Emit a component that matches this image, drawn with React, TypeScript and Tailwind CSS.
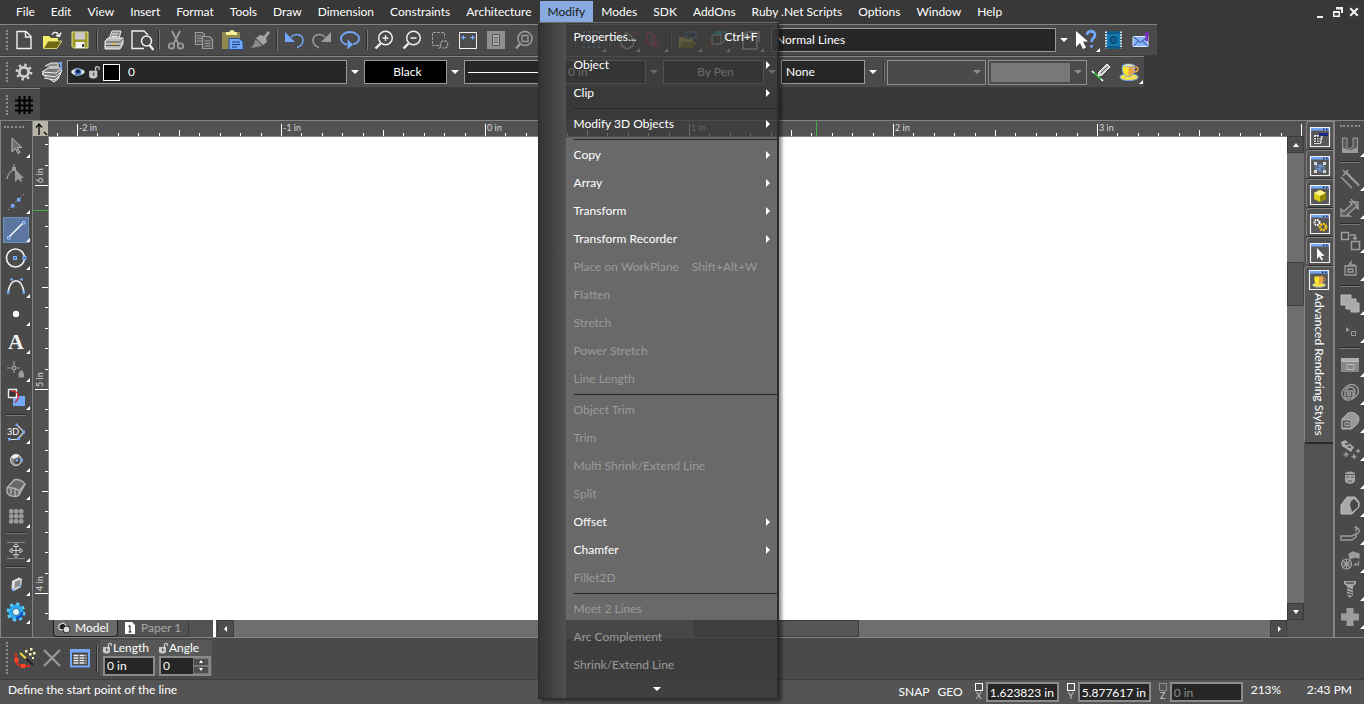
import React from 'react';

const W = '#f0f0f0';
const G = '#9c9c9c';
const B = '#73a7f7';

const icons: Record<string, React.ReactNode> = {
  newFile: <path d="M5 3.5h9l5 5v12H5z M13.5 3.5v5.5H19" fill="none" stroke={W} strokeWidth="1.4" />,
  open: (
    <>
      <path d="M3 8h6l2 2h7v3H9l-5 7H3z" fill="#f5ee6a" />
      <path d="M8 13h14l-5 7.500H3.500z" fill="#6f6b10" stroke="#eee884" strokeWidth=".8" />
      <path d="M12 6.500c2-3 6-3 7 1.500M16 7.500l3.500 1 1.500-4" fill="none" stroke={W} strokeWidth="1.400" />
    </>
  ),
  save: (
    <>
      <path d="M4 4h16v16H5.500L4 18.500z" fill="#9c9a2a" stroke="#e8e69a" />
      <path d="M7 4.500h10v7H7z" fill="#c9c9c9" />
      <path d="M7.500 14h9v6h-9z" fill="#f4f4f4" />
      <path d="M14 16h2v3h-2z" fill="#444" />
    </>
  ),
  print: (
    <>
      <path d="M7 11l3-8h9l-2 8z" fill="#8b8b8b" stroke={W} />
      <path d="M10 6h6M9.500 8.500h6" stroke={W} />
      <path d="M3 13l3-3h15v6l-3 5H3z" fill="#b9b9b9" stroke={W} />
      <path d="M4 14h14l3-3M4 17.500h14" stroke="#555" fill="none" />
      <path d="M10 15h4v1.500h-4z" fill="#d9c93a" />
    </>
  ),
  preview: (
    <>
      <path d="M18 7L14 3H2v17.500h12" fill="none" stroke={W} strokeWidth="1.400" />
      <circle cx="16.500" cy="13" r="5" fill="none" stroke={W} strokeWidth="1.500" />
      <path d="M19.500 17l4 5" stroke={W} strokeWidth="2.200" />
    </>
  ),
  cut: (
    <g fill="none" stroke={G} strokeWidth="1.800">
      <path d="M8 3l6.500 13M16 3L9.500 16" />
      <circle cx="7.500" cy="18" r="2.700" />
      <circle cx="16.500" cy="18" r="2.700" />
    </g>
  ),
  copy: (
    <g fill="#555" stroke={G} strokeWidth="1.200">
      <path d="M3.500 4.500h7l2 2v10h-9z M5 8h5M5 10.500h5M5 13h5" />
      <path d="M10.500 8.500h7l3 3v9h-10z M12.500 13h6M12.500 15.500h6M12.500 18h6" />
    </g>
  ),
  paste: (
    <>
      <path d="M2 4h18v17H2z" fill="#8f8b50" />
      <path d="M6 4h3l2-2h2l2 2h2v3H6z" fill="#f5ee9a" />
      <path d="M9 10.500h10l4 3v8H9z" fill="#73a7f7" stroke="#2c4a8c" />
      <path d="M12 14h8M12 16.500h8M12 19h5" stroke="#1f3a78" />
    </>
  ),
  brush: (
    <>
      <path d="M20 3l2 2-4 5 1 4-4 3-7-7 4-3 4 1z" fill="#a5a5a5" />
      <path d="M7.500 11l6.500 6.500-4 1.500-7 1 3-4z" fill="#8b8b8b" />
    </>
  ),
  undo: (
    <>
      <path d="M3 4v10h10z" fill={B} />
      <path d="M9 9c5-5 12-2 12 3.500 0 3-2 5.500-6 7" fill="none" stroke={B} strokeWidth="1.500" />
    </>
  ),
  redo: (
    <>
      <path d="M21 4v10H11z" fill={G} />
      <path d="M15 9C10 4 3 7 3 12.500c0 3 2 5.500 6 7" fill="none" stroke={G} strokeWidth="1.500" />
    </>
  ),
  loop: (
    <>
      <path d="M9 16.500C5 16 3 13 3 10.500 3 7 7 4 12 4s9 3 9 6.500c0 2.500-2 5.500-6 5.500" fill="none" stroke={B} strokeWidth="1.800" />
      <path d="M9.500 11.500l5.500 5-5.500 5z" fill={B} />
    </>
  ),
  zoomIn: (
    <g fill="none" stroke={W}>
      <circle cx="13.500" cy="10" r="6.800" strokeWidth="1.500" />
      <path d="M8.500 15.500L3.500 20.500" strokeWidth="2.400" />
      <path d="M10.500 10h6M13.500 7v6" strokeWidth="1.300" />
    </g>
  ),
  zoomOut: (
    <g fill="none" stroke={W}>
      <circle cx="13.500" cy="10" r="6.800" strokeWidth="1.500" />
      <path d="M8.500 15.500L3.500 20.500" strokeWidth="2.400" />
      <path d="M10.500 10h6" strokeWidth="1.500" />
    </g>
  ),
  zoomWindow: (
    <g fill="none" stroke={G}>
      <path d="M11 17.500H4.500v-13h12V10" strokeDasharray="3 1" />
      <path d="M12.500 18.500v-3.500l2-2h3.500l1.500 2v3.500l-2 1.500h-3M13 18.500l-2.500 2.500" strokeWidth="1.400" strokeDasharray="3 1" />
    </g>
  ),
  extents: (
    <>
      <path d="M3.500 4.500h17v16h-17z" fill="#4d4d4d" stroke={W} />
      <path d="M5 9.500l3-2.500v5zM19 9.500l-3-2.500v5z" fill={B} />
      <path d="M8 9.500h2M14 9.500h2" stroke={B} />
    </>
  ),
  fullPage: (
    <>
      <path d="M3 3h18v18H3z" fill="#8f8f8f" />
      <path d="M8.500 6.500h7v11h-7z M10 9.500h4M10 12h4M10 14.500h4" fill="#ababab" stroke="#555" />
    </>
  ),
  zoomSel: (
    <g fill="none" stroke={G}>
      <circle cx="13" cy="10.500" r="7" strokeWidth="1.500" />
      <path d="M10 7.500h6v6h-6z" strokeWidth="1.300" />
      <path d="M8 16l-4 4.500" strokeWidth="2.300" />
    </g>
  ),
  dotGrid: (
    <g fill={B}>
      {[5, 10, 15, 20].map((x) => [5, 10, 15, 20].map((y) => <circle key={`${x}-${y}`} cx={x - 1} cy={y - 1} r="1.300" />))}
    </g>
  ),
  hand: (
    <>
      <path d="M5 9l4 3 3-7 4 2 4 5-1 6-6 3-5-3z" fill="none" stroke={W} strokeWidth="1.300" />
      <path d="M18 4h4v4M3 5h4M4 18h3" stroke="#e33" fill="none" />
    </>
  ),
  plane: (
    <>
      <path d="M5 4l8 4v11l-8-5z" fill="none" stroke="#d34" strokeWidth="1.500" />
      <path d="M10 9l6 3v5l-6-3z" fill="none" stroke="#d34" />
      <path d="M10 9v8" stroke={B} />
    </>
  ),
  folder: (
    <>
      <path d="M3 9h5l2 2h7v9H3z" fill="#d6cb3f" />
      <path d="M10 4h10v6H10z" fill="#3b3b3b" stroke={B} />
      <path d="M6 14h15l-4 6H3z" fill="#8f8720" />
    </>
  ),
  cube: (
    <>
      <path d="M8 7l4-4h9l-4 4z" fill="#2fb0b0" />
      <path d="M8 7h9v9H8zM17 16l4-4V3" fill="none" stroke={W} />
      <path d="M2 18l6-3v6M8 16l-4-6" stroke="#e33" fill="none" />
    </>
  ),
  sheet: <path d="M5 8h14v13H5zM5 8l4-4h12v10M14 4v4" fill="none" stroke={W} strokeWidth="1.400" />,
  help: (
    <>
      <path d="M2 3v16l4-4 3 6 3-1.500-3-6h5z" fill="#fff" />
      <path d="M13 7c0-5 8-5 8 0 0 3-3.500 3-3.500 7M17.500 17v2.500" fill="none" stroke={B} strokeWidth="2.800" />
    </>
  ),
  book: (
    <>
      <path d="M4 3.500h15v17H4z" fill="#1478ae" />
      <path d="M4.500 3.500h14v2.500h-14zM4.500 18h14v2.500h-14z" fill="#0a5a8a" />
      <path d="M4 3.500v17M19 3.500v17" stroke="#eee" strokeWidth="1.800" strokeDasharray="1.600 1.200" />
      <circle cx="11.500" cy="12" r="3" fill="none" stroke="#0b3f66" strokeWidth="1.300" />
      <circle cx="11.500" cy="12" r="1" fill="#0b3f66" />
    </>
  ),
  mail: (
    <>
      <path d="M3 8.500h15v10H3z" fill="#86b2f8" stroke="#dce8ff" />
      <path d="M3 8.500l7.500 6 7.500-6M3 18.500l5.500-5.500M18 18.500l-5.500-5.500" fill="none" stroke="#2e4f93" />
      <path d="M15.500 13V7h-2L17 3l3 4h-2v6z" fill="#7a2fc0" />
    </>
  ),
  gear: (
    <>
      <circle cx="12" cy="12" r="4.600" fill="none" stroke="#cfcfcf" strokeWidth="2.800" />
      <circle cx="12" cy="12" r="7" fill="none" stroke="#cfcfcf" strokeWidth="2.800" strokeDasharray="2.400 3.100" />
    </>
  ),
  layers: (
    <>
      <path d="M2 14l6-4h14l-4 9-4 3z" fill="#777" stroke={W} />
      <path d="M2 12l6-4h14l-6 5zM3 15l12 2 6-5M4 18l11 2 6-6" fill="#777" stroke={W} />
      <path d="M5 6l6-3h7v4H9" fill="#8a8a8a" stroke={W} />
      <path d="M19 3h2v7" fill="none" stroke={B} strokeWidth="1.800" />
    </>
  ),
  pencil: (
    <>
      <path d="M3 11l11 10" stroke="#2fd02f" strokeWidth="1.500" />
      <path d="M3 11l2 2M12 19l2 2" stroke="#fff" strokeWidth="1.500" />
      <path d="M9 16l1-4 8-8 3 3-8 8z" fill="#c8c8c8" stroke="#fff" />
      <path d="M12 13l7-7" stroke="#555" />
    </>
  ),
  cup: (
    <>
      <path d="M3 17c0-2 3-3 9-3s9 1 9 3-3 3.500-9 3.500S3 19 3 17z" fill="#f7e04b" stroke={B} />
      <path d="M5.500 5.500h12c1 6-1 11-6 11s-7-5-6-11z" fill="#fbe62a" stroke={B} />
      <path d="M11.500 6h5.500c.8 5-1 10-5.500 10z" fill="#e9a14a" />
      <path d="M6 5.500c2-2 9-2 11.500 0-2 1.500-9 1.500-11.500 0z" fill="#fff3a0" stroke={B} strokeWidth=".8" />
      <path d="M18 7c4-1 4 5-.5 5" fill="none" stroke="#e9a14a" strokeWidth="1.500" />
    </>
  ),
  grid: <path d="M7.500 3v18M12.500 3v18M17.500 3v18M3 7.500h18M3 12.500h18M3 17.500h18" stroke="#000" strokeWidth="2" fill="none" />,
  select: <path d="M8 4v14l3.500-3.500 2.500 5 2-1-2.500-5h4.500z" fill="#707070" stroke="#b5b5b5" />,
  editNode: (
    <>
      <path d="M3 17c1-6 4-8 7-10M10 7V2" fill="none" stroke={G} strokeWidth="1.300" />
      <path d="M8 5h4v4H8z" fill={G} />
      <path d="M11 7v13l3-3 4 4-1-5h3z" fill="#999" />
    </>
  ),
  pointLine: (
    <>
      <path d="M4 20L20 4" stroke="#aaa" strokeDasharray="1.500 2" />
      <path d="M7 14h3.500v3.500H7zM13 8h3.500v3.500H13z" fill={B} />
    </>
  ),
  line: (
    <>
      <path d="M4.500 19.500L19.500 4.500" stroke="#fff" strokeWidth="1.500" />
      <path d="M3.500 18.500h2.500v2.500H3.500zM18.500 3.500H21V6h-2.500z" fill="#4a78c8" stroke="#a8ccff" />
    </>
  ),
  circle: (
    <>
      <circle cx="11.500" cy="12" r="9" fill="none" stroke={W} strokeWidth="1.600" />
      <path d="M9.500 10.500h3v3h-3zM19 10.500h3v3h-3z" fill="#3d6fc4" stroke="#8cbaff" />
    </>
  ),
  curve: (
    <>
      <path d="M4 18C7 3 17 3 20 18" fill="none" stroke={W} strokeWidth="1.500" />
      <path d="M6 4.500h3v2H6zM16 4.500h3v2h-3zM3 17h2.500v3H3zM18.500 17H21v3h-2.500z" fill={B} />
    </>
  ),
  dot: <circle cx="12" cy="12" r="3.200" fill="#fff" />,
  snapLock: (
    <>
      <path d="M3 10h5M12 10h4M10 3v5M10 12v3M8.500 8.500h3v3h-3z" fill="none" stroke={G} strokeWidth="1.200" />
      <path d="M15 15h4.500v4H15zM16 15v-2h2.500v2" fill={G} stroke={G} />
    </>
  ),
  squares: (
    <>
      <path d="M9 10h12v10H9z" fill={B} />
      <path d="M4.500 3.500h8v8h-8z" fill="#333" stroke={W} strokeWidth="1.400" />
      <path d="M7 5.500c9-1 9 6 4 11" fill="none" stroke="#d22" strokeWidth="1.300" />
    </>
  ),
  threeD: (
    <>
      <text x="3" y="15" fontSize="9" fill="#fff">3D</text>
      <path d="M13 5l7 7-6 7M5 19.500h10" fill="none" stroke="#ddd" strokeWidth="1.200" />
      <path d="M11.500 3.500h2.500V6h-2.500zM18.500 10.500h2.500v3h-2.500zM13 17.500h3v2.500h-3zM4 18h3v2.500H4z" fill={B} />
    </>
  ),
  sphere: (
    <>
      <circle cx="12" cy="12" r="5.500" fill="#8b8b8b" stroke="#ddd" />
      <path d="M7 9a6 6 0 0 1 8-2l-3 5z" fill="#eee" />
      <circle cx="13" cy="13" r="3" fill="#444" />
      <path d="M11.500 11h2.500v2.500h-2.500zM16.500 11H19v2.500h-2.500z" fill={B} />
    </>
  ),
  can: (
    <>
      <path d="M3 12l7-8c3-1.500 9 .5 11 4l-6 11c-3 3-11 1-12-3z" fill="#686868" stroke="#b5b5b5" strokeWidth="1.400" />
      <path d="M3 12c3-1 9 0 12 3l6-7M15 15v4M7 12v6M11 13v7" fill="none" stroke="#b5b5b5" strokeWidth="1.300" />
    </>
  ),
  blocks: (
    <g fill={G}>
      {[5, 10, 15].map((x) => [5, 10, 15].map((y) => <rect key={`${x}-${y}`} x={x} y={y} width="4.500" height="4.500" rx="1.500" />))}
    </g>
  ),
  move: (
    <>
      <path d="M3 4.500h18M3 20.500h18" stroke="#888" />
      <path d="M12 6v13M5 12.500h14" stroke="#ccc" />
      <path d="M12 5.500l2.500 3h-5zM12 19.500l2.500-3h-5zM5 12.500l3-2.500v5zM19 12.500l-3-2.500v5z" fill="#4b4b4b" stroke="#ccc" />
    </>
  ),
  slab: (
    <>
      <path d="M8 9l7-3.500 3 1.500-1 8-7 4-2.500-2z" fill="#ddd" />
      <path d="M11 10l5.500-2.500-.5 6-5.500 3z" fill="#8a8a8a" />
      <path d="M8 16.500h2.500v2.500H8zM15 13h2v2.500h-2z" fill={B} />
    </>
  ),
  blueGear: (
    <>
      <circle cx="12" cy="12" r="5.500" fill="none" stroke="#2ba8f2" strokeWidth="4" />
      <circle cx="12" cy="12" r="8.200" fill="none" stroke="#57d1fb" strokeWidth="2.600" strokeDasharray="3.200 3.240" />
      <circle cx="12" cy="12" r="3" fill="#d9f6ff" />
      <path d="M12 18a6 6 0 0 0 6-6" fill="none" stroke="#1450c8" strokeWidth="2.500" />
    </>
  ),
  magnet: (
    <>
      <path d="M4.500 5v14.500H19.500V5H15v9l-4 2-2-2V5z" fill="#5c5c5c" stroke={G} />
      <path d="M4 14v6h16v-6l-7 3h-2z" fill={G} />
    </>
  ),
  parallel: <path d="M3 10l11 11M8 5l13 13M10 3l-5 6M5 3l16 16" stroke={G} strokeWidth="1.600" />,
  offset: (
    <g fill="none" stroke={G} strokeWidth="1.300">
      <path d="M3 21v-7l2.500 2.500L14 9l-2-2h8v7l-2-2-8.500 7.500L12 21z" fill="#5a5a5a" />
      <path d="M13 4l7 8" />
    </g>
  ),
  copyTo: (
    <g fill="none" stroke={G} strokeWidth="1.500">
      <path d="M3.500 3.500h7v7h-7zM13.500 12.500h8v8h-8z" />
      <path d="M12 6h5v4M15 8.500l2 2 2-2" />
    </g>
  ),
  rotateBox: (
    <g fill="none" stroke={G} strokeWidth="1.300">
      <path d="M7 9h11v9H7zM10 12h5v3h-5z" />
      <path d="M10 9l3-4v3h4" />
    </g>
  ),
  union: <path d="M3 4h10v4h5v4h3v9h-8v-3H8v-4H3z" fill="#aaa" stroke="#bbb" />,
  tiny: (
    <>
      <path d="M8 8l4 3-4 2z" fill={G} />
      <path d="M13.500 12.500h4v4h-4z" fill="none" stroke={G} />
    </>
  ),
  panel: (
    <>
      <path d="M3 5h18v14H3z" fill="#888" />
      <path d="M3 5h18v3H3z" fill="#b0b0b0" />
      <path d="M9 11.500h7v5H9zM3 8.500h18" fill="none" stroke="#bbb" />
    </>
  ),
  ring: (
    <g fill="none" stroke={G} strokeWidth="1.400">
      <path d="M5 9l4-4c6-4 13 1 11 7-1 3-4 5-7 7M5 9c-3 5 1 11 7 10" />
      <path d="M7 10h8v7H7zM9.500 12h3v2.500h-3zM8 9c3-5 9-3 9 2 0 3-1 4-3 6" />
    </g>
  ),
  tube: (
    <>
      <path d="M4 10l6-6c4-2 11 1 11 6 0 4-5 9-8 10H4z" fill="#999" stroke="#b5b5b5" />
      <path d="M4 11h9v8H4zM7 13.500h4v3H7z" fill="#555" stroke="#b5b5b5" />
    </>
  ),
  spray: (
    <>
      <path d="M3 5l4-2 9 7-3 5-9-6z" fill="#aaa" />
      <path d="M7 7h4M10 10h3" stroke="#444" strokeWidth="1.500" />
      <path d="M8 15v5M5.500 17.500h5M20 12v4M18 14h4M16 17v5M13.500 19.500h5" stroke={G} strokeWidth="1.500" />
    </>
  ),
  head: (
    <>
      <path d="M7 9c0-3.500 10-3.500 10 0v6c0 5-10 5-10 0z" fill="#a5a5a5" />
      <path d="M7 9.500h10M8.500 12h2.500M13 12h2.500M10 16h4" stroke="#555" strokeWidth="1.200" />
    </>
  ),
  wedge: (
    <>
      <path d="M3 12l6-8h8l4 5v5l-7 7H3z" fill="#aaa" stroke="#bbb" />
      <path d="M12 12c0-3 2-5 4-6l4 4v4l-6 5z" fill="#484848" />
    </>
  ),
  bend: (
    <g fill="none" stroke={G} strokeWidth="1.400">
      <path d="M3 15h11l4-2v3l-4 3H3z" />
      <path d="M18 13c4-1 4-5 1-6l-2-1M17 10c2-1 2-3 0-5" />
    </g>
  ),
  globe: (
    <g fill="none" stroke={G} strokeWidth="1.200">
      <path d="M11 5l4-2 6 2v4l-4-1-5 2z" fill={G} />
      <circle cx="8.500" cy="15" r="5" />
      <path d="M3.500 15h10M8.500 10v10M5 11.500l7 7M12 11.500l-7 7M20.500 12v4h-4l2-2" />
    </g>
  ),
  screw: (
    <>
      <path d="M6 4h12v3l-3 2v9l-3 3-3-3V9L6 7z" fill="#a5a5a5" />
      <path d="M8 6h8M9 11l6 2M9 14l6 2M9 17l5 1" stroke="#505050" strokeWidth="1.300" />
    </>
  ),
  plus: <path d="M8.500 3h7v5.500H21v7h-5.500V21h-7v-5.500H3v-7h5.500z" fill="#9d9d9d" />,
  wand: (
    <>
      <path d="M4 7v7c0 4 3 6 8 6h6" fill="none" stroke="#e32a1a" strokeWidth="1.800" />
      <path d="M2.500 12h4v4h-4zM9 18h4v4H9z" fill="#ff4a2a" />
      <path d="M9 8l12 11" stroke="#222" strokeWidth="2" />
      <path d="M8 7l6 5.500" stroke="#e9df4a" strokeWidth="2" />
      <path d="M13 4h2.500v2.500H13zM18 2h2.500v2.500H18zM17 7h2.500v2.500H17zM21 6h2.500v2.500H21zM20 11h2v2h-2z" fill="#f8f3a8" />
    </>
  ),
  cancel: <path d="M4 4l16 16M20 4L4 20" stroke="#9a9a9a" strokeWidth="2.200" />,
  table: (
    <>
      <path d="M3 4h18v16.500H3z" fill="#4a4a4a" stroke={B} strokeWidth="2" />
      <path d="M3 3.500h18v3H3z" fill={B} />
      <path d="M5.500 9.500h13M5.500 12h13M5.500 14.500h13M5.500 17h13" stroke="#eee" strokeWidth="1.400" strokeDasharray="5 1" />
    </>
  ),
};

function Icon({ name }: { name: string }) {
  return (
    <svg viewBox="0 0 24 24" className="w-6 h-6 shrink-0" fill="none" aria-hidden="true">
      {icons[name]}
    </svg>
  );
}

function Slot({ name, fly = false, active = false }: { name: string; fly?: boolean; active?: boolean }) {
  return (
    <button type="button" aria-label={name} className="relative w-7 h-7 shrink-0 flex items-center justify-center">
      {active && <span className="absolute inset-px bg-[#5b779f] border border-[#6d8dbb]" />}
      <span className="relative">
        {name === 'letter' ? (
          <span className="block font-['Liberation_Serif',serif] font-bold text-[22px] leading-6 text-[#f0f0f0]">A</span>
        ) : (
          <Icon name={name} />
        )}
      </span>
      {fly && (
        <svg viewBox="0 0 4 4" className="absolute right-0 bottom-0.5 w-1 h-1">
          <path d="M4 0v4H0z" fill="#fff" />
        </svg>
      )}
    </button>
  );
}

const VSep = () => (
  <div className="w-1.5 shrink-0 flex justify-center">
    <div className="w-0.5 h-5 bg-[#2c2c2c] border-r border-[#7a7a7a]" />
  </div>
);
const HSep = () => (
  <div className="h-1.5 w-7 shrink-0 flex flex-col justify-center items-center">
    <div className="h-0.5 w-5 bg-[#2a2a2a] border-b border-[#7a7a7a]" />
  </div>
);
const Grip = () => <div className="w-2.5 shrink-0 h-5 flex justify-center"><div className="h-5 border-l-2 border-dotted border-[#8c8c8c] ml-1" /></div>;

function Arrow({ dim = false }: { dim?: boolean }) {
  return (
    <span className="w-4 shrink-0 flex justify-center">
      <svg viewBox="0 0 8 4" className="w-2 h-1">
        <path d="M0 0h8L4 4z" fill={dim ? '#8f8f8f' : '#fff'} />
      </svg>
    </span>
  );
}

function Drop({ label, value, className = '' }: { label: string; value: string; className?: string }) {
  return (
    <label className="flex items-center shrink-0">
      <select aria-label={label} className={`appearance-none h-6 border border-[#9a9a9a] pl-1 text-[12px] leading-4 text-white outline-none ${className}`}>
        <option>{value}</option>
      </select>
      <Arrow />
    </label>
  );
}

const menus = ['File', 'Edit', 'View', 'Insert', 'Format', 'Tools', 'Draw', 'Dimension', 'Constraints', 'Architecture', 'Modify', 'Modes', 'SDK', 'AddOns', 'Ruby .Net Scripts', 'Options', 'Window', 'Help'];

interface MenuEntry {
  text?: string;
  keys?: string;
  sub?: boolean;
  off?: boolean;
}

const modifyMenu: MenuEntry[] = [
  { text: 'Properties...', keys: 'Ctrl+F' },
  { text: 'Object', sub: true },
  { text: 'Clip', sub: true },
  {},
  { text: 'Modify 3D Objects', sub: true },
  {},
  { text: 'Copy', sub: true },
  { text: 'Array', sub: true },
  { text: 'Transform', sub: true },
  { text: 'Transform Recorder', sub: true },
  { text: 'Place on WorkPlane', keys: 'Shift+Alt+W', off: true },
  { text: 'Flatten', off: true },
  { text: 'Stretch', off: true },
  { text: 'Power Stretch', off: true },
  { text: 'Line Length', off: true },
  {},
  { text: 'Object Trim', off: true },
  { text: 'Trim', off: true },
  { text: 'Multi Shrink/Extend Line', off: true },
  { text: 'Split', off: true },
  { text: 'Offset', sub: true },
  { text: 'Chamfer', sub: true },
  { text: 'Fillet2D', off: true },
  {},
  { text: 'Meet 2 Lines', off: true },
  { text: 'Arc Complement', off: true },
  { text: 'Shrink/Extend Line', off: true },
];

function ModifyMenu() {
  return (
    <div className="absolute -left-0.5 top-[22px] z-20 w-[241px] flex border border-[#2b2b2b] border-t-[#6a6a6a] border-r-2 bg-[#3a3a3a]/76 shadow-[3px_3px_3px_rgba(0,0,0,0.4)]">
      <div className="w-[27px] shrink-0 bg-linear-to-r from-[#333333] to-[#515151]" />
      <ul className="flex-1 pl-2">
        {modifyMenu.map((m, i) =>
          m.text ? (
            <li key={i}>
              <button
                type="button"
                disabled={m.off}
                className={`h-7 w-full flex items-center justify-between pr-[7px] text-[12px] leading-4 ${m.off ? 'text-[#9b9b9b]' : 'text-white'}`}
              >
                <span>{m.text}</span>
                {m.keys && <span className="mr-3">{m.keys}</span>}
                {m.sub && (
                  <svg viewBox="0 0 4 8" className="w-1 h-2">
                    <path d="M0 0l4 4-4 4z" fill="#fff" />
                  </svg>
                )}
              </button>
            </li>
          ) : (
            <li key={i} className="h-[3px] flex items-center">
              <hr className="w-full border-[#262626]" />
            </li>
          )
        )}
        <li className="h-[19px] flex items-center justify-center pr-9">
          <Arrow />
        </li>
      </ul>
    </div>
  );
}

function WindowButtons() {
  return (
    <div className="ml-auto flex items-center gap-1 pr-1">
      {['M1 10h6v2H1z', 'M4 1h7v6H9V3.500H4zM1 5h7v6H1zM2.500 7v2.500h4V7z', 'M1.500 3l1.500-1.500 3 3 3-3L10.500 3l-3 3 3 3L9 10.500l-3-3-3 3L1.500 9l3-3z'].map((d, i) => (
        <button key={i} type="button" aria-label={['Minimize', 'Restore', 'Close'][i]}>
          <svg viewBox="0 0 12 12" className="w-3 h-3">
            <path d={d} fill="#f0f0f0" fillRule="evenodd" />
          </svg>
        </button>
      ))}
    </div>
  );
}

const STEP = 204;

function TopRuler() {
  const ticks = Array.from({ length: 64 }, (_, i) => i - 1);
  return (
    <svg className="w-full h-4 bg-[#525252]" aria-hidden="true">
      {ticks.map((i) => {
        const x = Math.round(29 + (i * STEP) / 10);
        const top = i % 10 === 0 ? 3 : i % 5 === 0 ? 9 : 12;
        return <rect key={i} x={x} y={top} width="1" height={15 - top} fill="#fff" />;
      })}
      {[-2, -1, 0, 1, 2, 3].map((n, i) => (
        <text key={n} x={31 + i * STEP} y="10" fontSize="9" fill="#d8d8d8">{`${n} in`}</text>
      ))}
      <rect x="768" y="0" width="1" height="15" fill="#3fae49" />
    </svg>
  );
}

function SideRuler() {
  const ticks = Array.from({ length: 40 }, (_, i) => i);
  return (
    <svg className="w-4 flex-1 bg-[#525252]" aria-hidden="true">
      {ticks.map((i) => {
        const y = Math.round(49 + ((i - 2) * STEP) / 10);
        const x = i % 10 === 2 ? 2 : i % 5 === 2 ? 9 : 12;
        return <rect key={i} x={x} y={y} width={15 - x} height="1" fill="#fff" />;
      })}
      {[6, 5, 4].map((n, i) => (
        <text key={n} transform={`translate(10 ${47 + i * STEP}) rotate(-90)`} fontSize="9" fill="#d8d8d8">{`${n} in`}</text>
      ))}
      <rect x="0" y="74" width="15" height="1" fill="#3fae49" />
    </svg>
  );
}

function ScrollButton({ d, label }: { d: string; label: string }) {
  return (
    <button type="button" aria-label={label} className="w-[17px] h-[17px] shrink-0 bg-[#4d4d4d] border border-[#3c3c3c] flex items-center justify-center">
      <svg viewBox="0 0 8 8" className="w-2 h-2">
        <path d={d} fill="#fff" />
      </svg>
    </button>
  );
}

const palettes: { label: string; art: React.ReactNode }[] = [
  { label: 'Properties', art: <><path d="M5 9h9l-2 9H5z" fill="#ddd" /><path d="M5 11.500h7M5 14h7M5 16.500h6M7.500 10v7M10 10v7" stroke="#333" strokeWidth=".9" /><path d="M10 7h9v3h-6l-3 1z" fill="#1b2a80" /></> },
  { label: 'Blocks', art: <><path d="M5 7h3v3H5zM14 7h3v3h-3zM5 15h3v3H5zM14 15h3v3h-3z" fill="#ddd" /><path d="M7 10h5v4H7zM10 11h5v5h-5z" stroke={B} fill="none" /></> },
  { label: 'Materials', art: <><path d="M11 6l6 3v6l-6 3-6-3V9z" fill="#d9cf1a" /><path d="M11 6l6 3-6 3-6-3z" fill="#fff68a" /><path d="M11 12v6l6-3V9z" fill="#8e8708" /></> },
  { label: 'Settings', art: <><circle cx="8" cy="9.500" r="2.600" stroke="#fff" strokeWidth="2" fill="none" strokeDasharray="1.600 .8" /><circle cx="14" cy="14" r="3" stroke="#f1c40f" strokeWidth="2.600" fill="none" strokeDasharray="2 .7" /></> },
  { label: 'Selection', art: <path d="M8 6v11l2.500-2.500 2 4 1.500-1-2-3.500h3.500z" fill="#fff" /> },
  { label: 'Rendering', art: <><ellipse cx="11" cy="16" rx="6.500" ry="2.300" fill="#f7e04b" stroke={B} strokeWidth=".6" /><path d="M6.500 7.500h8.500c.6 5-1 8-4.500 8s-4.600-3-4-8z" fill="#fbe62a" /><path d="M11 7.500h4c.6 5-1 7.500-4 7.500z" fill="#e9a14a" /><path d="M15 9c3-.5 3 3.500-.5 3.500" stroke="#e9a14a" fill="none" /></> },
];

const PaletteIcon = ({ art }: { art: React.ReactNode }) => (
  <svg viewBox="0 0 22 22" className="w-[22px] h-[22px]" aria-hidden="true">
    <path d="M1.500 1.500h19v19h-19z" fill="#585858" stroke="#f0f0f0" strokeWidth="1.200" />
    <path d="M2 2h18v2.500H2z" fill={B} />
    <path d="M14 2.500h1.500v1.500H14zM17 2.500h1.500v1.500H17z" fill="#1d2c50" />
    {art}
  </svg>
);

const Padlock = ({ size = 'w-2.5 h-3' }: { size?: string }) => (
  <svg viewBox="0 0 10 12" className={`${size} shrink-0`} aria-hidden="true">
    <path d="M0 5h7v5c-1 2-6 2-7 0z" fill="#c9c9c9" />
    <path d="M5.500 5V2.500c0-1.500 3-1.500 3 0V4" fill="none" stroke="#c9c9c9" strokeWidth="1.200" />
    <path d="M3 6.500h1.500V9H3z" fill="#555" />
  </svg>
);

function Coord({ axis, value, off = false }: { axis: string; value: string; off?: boolean }) {
  return (
    <label className="flex items-center gap-[3px]">
      <span className="flex flex-col items-center">
        <span className={`w-2 h-2 border ${off ? 'border-[#8d8d8d]' : 'border-white'}`} />
        <span className="text-[9px] leading-[10px] text-[#c8c8c8]">{axis}</span>
      </span>
      <input
        defaultValue={value}
        disabled={off}
        className={`w-[73px] h-5 bg-[#262626] border-2 border-[#8a8a8a] px-0.5 text-[12px] leading-4 outline-none ${off ? 'text-[#8d8d8d]' : 'text-white'}`}
      />
    </label>
  );
}

const left = ['select', 'editNode', 'pointLine', 'line', 'circle', 'curve', 'dot', 'letter', 'snapLock', 'squares', '-', 'threeD', 'sphere', 'can', 'blocks', '-', 'move', '-', 'slab', 'blueGear'];
const right = ['magnet', '-', 'parallel', 'offset', '-', 'copyTo', 'rotateBox', '-', 'union', 'tiny', '-', 'panel', 'ring', 'tube', 'spray', 'head', 'wedge', 'bend', 'globe', 'screw', 'plus'];
const standard = ['newFile', 'open', 'save', '-', 'print', 'preview', '-', 'cut', 'copy', 'paste', 'brush', '-', 'undo', 'redo', 'loop', '-', 'zoomIn', 'zoomOut', 'zoomWindow', 'extents', 'fullPage', 'zoomSel'];
const views = ['dotGrid', '-', 'hand', 'plane', '-', 'folder', 'cube', '-', 'sheet'];

export default function App() {
  return (
    <div className="h-screen flex flex-col overflow-hidden bg-[#383838] text-white text-[12px] leading-4 font-['Lato','Open_Sans',sans-serif] select-none">
      <nav className="h-6 shrink-0 flex items-stretch pl-2">
        {menus.map((m) => (
          <div key={m} className="relative flex">
            <button type="button" className={`px-2 h-[21px] mt-px whitespace-nowrap ${m === 'Modify' ? 'bg-[#87abe0] text-[#1a1a1a]' : ''}`}>
              {m}
            </button>
            {m === 'Modify' && <ModifyMenu />}
          </div>
        ))}
        <WindowButtons />
      </nav>

      <div className="h-8 shrink-0 w-[1157px] flex items-center bg-[#4a4a4a] border-t border-t-[#848484] border-b border-b-[#3a3a3a]">
        <Grip />
        {standard.map((n, i) => (n === '-' ? <VSep key={i} /> : <Slot key={i} name={n} />))}
        <div className="w-[34px] shrink-0" />
        <VSep />
        {views.map((n, i) => (n === '-' ? <VSep key={i} /> : <Slot key={i} name={n} fly />))}
        <div className="flex-1" />
        <Drop label="Line style" value="Normal Lines" className="w-[285px] bg-[#272727]" />
        <div className="flex pr-px">
          <Slot name="help" fly />
          <Slot name="book" />
          <Slot name="mail" />
        </div>
      </div>

      <div className="h-8 shrink-0 w-[1144px] flex items-center bg-[#4a4a4a] border-t border-t-[#848484] border-b border-b-[#3a3a3a]">
        <Grip />
        <Slot name="gear" />
        <Slot name="layers" />
        <label className="ml-px flex items-center">
          <span className="w-[280px] h-6 flex items-center border border-[#9a9a9a] bg-[#272727] pl-[3px]">
            <svg viewBox="0 0 14 10" className="w-3.5 h-2.5" aria-hidden="true">
              <path d="M0 5c3-5 10-5 14 0-4 5-11 5-14 0z" fill="#e8e8e8" />
              <circle cx="7" cy="5" r="3.500" fill="#4b78c8" />
              <circle cx="7" cy="4.500" r="1.800" fill="#0a1530" />
            </svg>
            <span className="ml-1"><Padlock size="w-3 h-3.5" /></span>
            <span className="w-[17px] h-[17px] ml-0.5 border border-white bg-black" />
            <select aria-label="Layer" className="appearance-none flex-1 ml-1 pl-1 outline-none">
              <option>0</option>
            </select>
          </span>
          <Arrow />
        </label>
        <Drop label="Color" value="Black" className="w-[83px] ml-px bg-black [text-align-last:center]" />
        <label className="ml-px flex items-center">
          <span className="w-[83px] h-6 border border-[#9a9a9a] bg-[#272727] flex items-center px-[3px]">
            <span className="h-px flex-1 bg-white" />
          </span>
          <Arrow />
        </label>
        <Drop label="Width" value="0 in" className="w-[83px] bg-[#272727]" />
        <Drop label="Pen" value="By Pen" className="w-[101px] ml-px bg-[#272727] [text-align-last:center]" />
        <Drop label="Pattern" value="None" className="w-[84px] ml-px bg-[#272727]" />
        <VSep />
        <div className="flex-1" />
        <button type="button" disabled aria-label="Scale" className="w-[99px] h-[25px] shrink-0 border border-[#8f8f8f] flex items-center justify-end">
          <Arrow dim />
        </button>
        <button type="button" disabled aria-label="Hatch" className="w-[99px] h-[25px] shrink-0 ml-0.5 border border-[#8f8f8f] flex items-center pl-0.5">
          <span className="flex-1 h-[19px] bg-[#787878]" />
          <Arrow dim />
        </button>
        <div className="flex pr-px">
          <Slot name="pencil" />
          <Slot name="cup" fly />
        </div>
      </div>

      <div className="h-8 shrink-0 w-10 flex items-center bg-[#4a4a4a] border-t border-t-[#848484]">
        <Grip />
        <Slot name="grid" />
      </div>

      <main className="flex-1 min-h-0 flex">
        <aside className="w-8 shrink-0 flex flex-col items-start pl-px bg-[#4a4a4a] border-l border-t border-[#848484] overflow-hidden">
          <div className="h-[11px] shrink-0 flex items-center pl-0.5">
            <div className="w-5 border-t-2 border-dotted border-[#8c8c8c]" />
          </div>
          {left.map((n, i) => (n === '-' ? <HSep key={i} /> : <Slot key={i} name={n} active={n === 'line'} fly={n !== 'editNode'} />))}
        </aside>

        <section className="flex-1 min-w-0 flex flex-col border-l border-t border-[#848484]">
          <div className="flex-1 min-h-0 flex">
            <div className="w-[15px] shrink-0 flex flex-col overflow-hidden">
              <div className="h-[15px] shrink-0 bg-[#b7b5a5]">
                <svg viewBox="0 0 15 15" className="w-[15px] h-[15px]" aria-hidden="true">
                  <path d="M6 14V4M3 6.500L6 3l3 3.500M11 11l3 3" stroke="#111" strokeWidth="1.400" fill="none" />
                </svg>
              </div>
              <SideRuler />
            </div>
            <div className="flex-1 min-w-0 flex flex-col">
              <div className="h-[15px] shrink-0 overflow-hidden">
                <TopRuler />
              </div>
              <div className="flex-1 min-h-0 flex">
                <div className="flex-1 bg-white border-l border-t border-[#848484]" />
                <div className="w-[17px] shrink-0 flex flex-col bg-[#6e6e6e]">
                  <ScrollButton label="Scroll up" d="M1 6l3-4 3 4z" />
                  <div className="grow-[110]" />
                  <div className="h-[44px] bg-[#555555] border border-[#3f3f3f]" />
                  <div className="grow-[299]" />
                  <ScrollButton label="Scroll down" d="M1 2l3 4 3-4z" />
                </div>
              </div>
            </div>
          </div>
          <div className="h-[17px] shrink-0 flex bg-[#525252]">
            <button type="button" className="ml-5 w-[65px] flex items-center gap-1 pl-1 bg-[#6a6a6a] border border-[#1f1f1f] border-t-0 rounded-b-sm">
              <svg viewBox="0 0 13 12" className="w-[13px] h-3" aria-hidden="true">
                <path d="M1 3l4-2 3 2v4L4 8 1 7z" fill="#222" stroke="#fff" />
                <circle cx="8.500" cy="7.500" r="3.500" fill="#ddd" stroke="#222" />
              </svg>
              Model
            </button>
            <button type="button" className="w-[71px] flex items-center gap-1.5 pl-[7px] text-[#a8a8a8] border-r border-b border-[#3c3c3c]">
              <svg viewBox="0 0 10 12" className="w-2.5 h-3" aria-hidden="true">
                <path d="M0 0h7l3 3v9H0z" fill="#fff" />
                <path d="M3.500 4.500L5 3.500V10M3.500 10h3" stroke="#111" fill="none" />
              </svg>
              Paper 1
            </button>
            <div className="w-6 shrink-0" />
            <div className="w-[3px] mr-px shrink-0 bg-white" />
            <div className="flex-1 flex bg-[#6e6e6e]">
              <ScrollButton label="Scroll left" d="M5 1L2 4l3 3z" />
              <div className="grow-[461]" />
              <div className="w-[165px] bg-[#555555] border border-[#3f3f3f]" />
              <div className="grow-[412]" />
              <ScrollButton label="Scroll right" d="M3 1l3 3-3 3z" />
            </div>
            <div className="w-[17px] shrink-0" />
          </div>
        </section>

        <aside className="w-[29px] shrink-0 flex flex-col bg-[#525252] border-t border-[#848484]">
          {palettes.map((p, i) =>
            i < 5 ? (
              <button key={p.label} type="button" aria-label={p.label} className="h-[29px] shrink-0 ml-0.5 pt-1 flex justify-center items-start border-l border-t border-[#848484] border-b border-b-[#2a2a2a] rounded-l-sm bg-[#525252]">
                <PaletteIcon art={p.art} />
              </button>
            ) : (
              <button key={p.label} type="button" className="h-[178px] shrink-0 flex flex-col items-center gap-0.5 pt-0.5 bg-[#565656] border-l border-t border-[#848484] border-b-2 border-b-[#2a2a2a] rounded-l-sm">
                <PaletteIcon art={p.art} />
                <span className="[writing-mode:vertical-rl] whitespace-nowrap">Advanced Rendering Styles</span>
              </button>
            )
          )}
        </aside>

        <aside className="w-[31px] shrink-0 flex flex-col items-center bg-[#4a4a4a] border-l-2 border-t border-[#848484] overflow-hidden">
          <div className="h-2.5 shrink-0 flex items-center">
            <div className="w-5 border-t-2 border-dotted border-[#8c8c8c]" />
          </div>
          {right.map((n, i) => (n === '-' ? <HSep key={i} /> : <Slot key={i} name={n} fly />))}
        </aside>
      </main>

      <div className="h-[42px] shrink-0 flex items-center bg-[#4a4a4a] border-t border-[#848484] pb-0.5">
        <div className="w-2.5 shrink-0 h-8 flex justify-center"><div className="h-8 border-l-2 border-dotted border-[#8c8c8c] ml-1" /></div>
        <Slot name="wand" />
        <Slot name="cancel" />
        <Slot name="table" />
        <div className="w-1.5 shrink-0 flex justify-center">
          <div className="w-0.5 h-7 bg-[#2c2c2c] border-r border-[#7a7a7a]" />
        </div>
        <div className="flex gap-1 bg-[#575757] pl-[3px] pr-px h-9">
          <label className="w-[52px] block">
            <span className="flex items-center h-4"><Padlock />Length</span>
            <input defaultValue="0 in" className="block w-full h-5 bg-[#262626] border-2 border-[#8a8a8a] px-0.5 outline-none" />
          </label>
          <label className="w-[52px] block">
            <span className="flex items-center h-4"><Padlock />Angle</span>
            <span className="flex h-5 bg-[#262626] border-2 border-[#8a8a8a]">
              <input defaultValue="0" className="min-w-0 flex-1 px-0.5 outline-none" />
              <span className="w-4 shrink-0 flex flex-col">
                {['M0 3l2-3 2 3z', 'M0 0l2 3 2-3z'].map((d) => (
                  <span key={d} className="flex-1 flex items-center justify-center bg-[#4d4d4d] border border-[#777777]">
                    <svg viewBox="0 0 4 3" className="w-1 h-[3px]"><path d={d} fill="#fff" /></svg>
                  </span>
                ))}
              </span>
            </span>
          </label>
        </div>
      </div>

      <footer className="h-[25px] shrink-0 flex items-center bg-[#545454] border-t border-[#3c3c3c] pl-2 pr-3">
        <span className="mb-1">Define the start point of the line</span>
        <div className="ml-auto flex items-center">
          <span>SNAP</span>
          <span className="ml-2">GEO</span>
          <div className="ml-3 flex items-center gap-2">
            <Coord axis="X" value="1.623823 in" />
            <Coord axis="Y" value="5.877617 in" />
            <Coord axis="Z" value="0 in" off />
          </div>
          <span className="ml-2 w-14 mb-1">213%</span>
          <span className="mb-1">2:43 PM</span>
        </div>
      </footer>
    </div>
  );
}
